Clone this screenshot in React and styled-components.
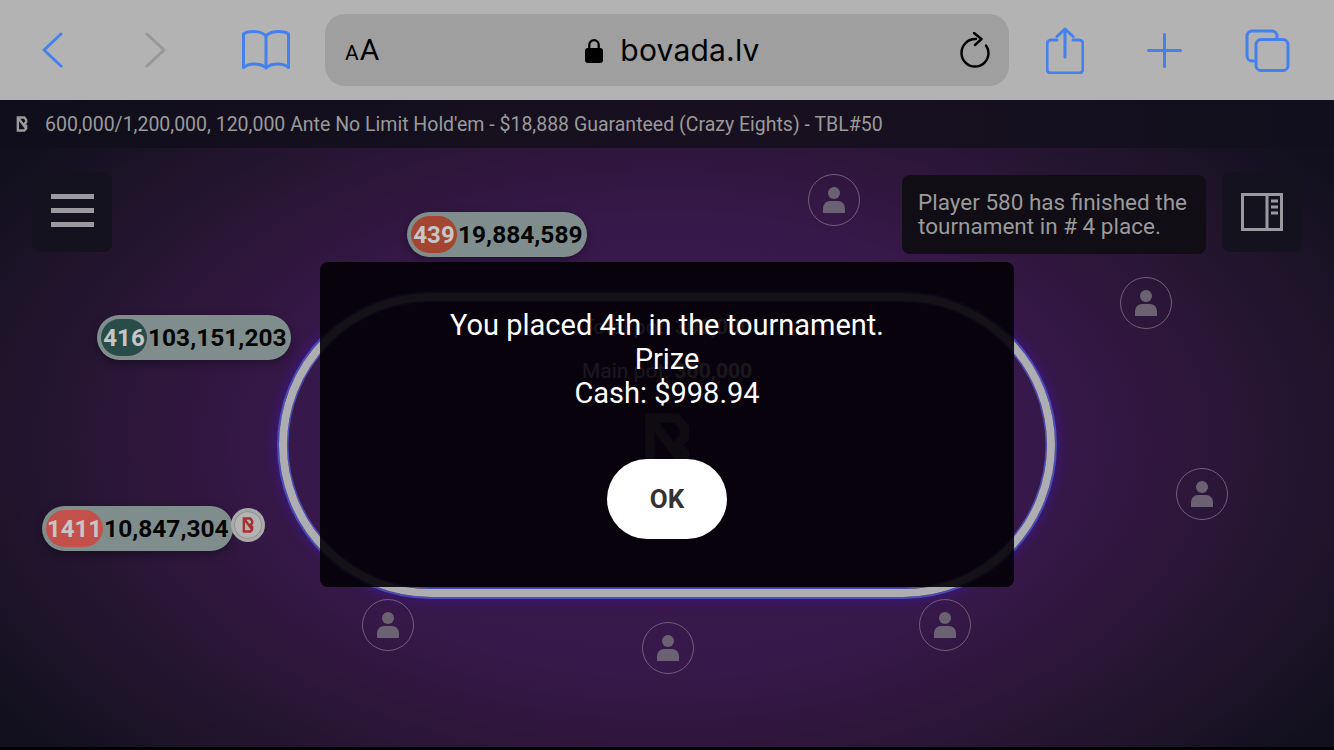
import React from "react";
import styled, { createGlobalStyle } from "styled-components";

const Global = createGlobalStyle`
  html, body { margin: 0; padding: 0; background: #000; }
  body { font-family: Roboto, "Liberation Sans", sans-serif; }
`;

const Page = styled.div`
  width: 1334px;
  height: 750px;
  display: flex;
  flex-direction: column;
  overflow: hidden;
  background: #000;
`;

const BrowserBar = styled.header`
  flex: 0 0 100px;
  display: grid;
  grid-template-columns: 325px 684px 325px;
  align-items: center;
  background: #b3b3b3;
`;

const IconGroup = styled.nav`
  display: flex;
  align-items: center;
  height: 100%;
`;

const ToolIcon = styled.svg`
  flex: none;
  margin-left: ${(p) => p.$ml}px;
  margin-top: ${(p) => p.$mt || 0}px;
  fill: none;
  stroke: ${(p) => p.$color || "#4480ee"};
  stroke-width: 3;
  stroke-linecap: round;
  stroke-linejoin: round;
`;

const UrlField = styled.div`
  height: 72px;
  border-radius: 20px;
  background: #9f9f9f;
  display: flex;
  align-items: center;
  justify-content: space-between;
  padding: 0 19px 0 20px;
  color: #000;
`;

const ReaderMode = styled.div`
  display: flex;
  align-items: baseline;
  width: 40px;
  margin-top: 2px;
`;

const ReaderLetter = styled.span`
  font-size: ${(p) => p.$size}px;
  line-height: 34px;
  margin-right: 1px;
`;

const Domain = styled.div`
  display: flex;
  align-items: center;
  gap: 17px;
  font-family: Inter, Roboto, sans-serif;
  font-size: 30px;
  letter-spacing: 0.2px;
`;

const TitleBar = styled.div`
  flex: 0 0 48px;
  display: flex;
  align-items: center;
  padding-left: 16px;
  gap: 17px;
  background: linear-gradient(90deg, #100e1c, #181020 55%, #110f1d);
  color: #9a9a9a;
  font-size: 19.5px;
`;

const Stage = styled.main`
  position: relative;
  flex: 0 0 599px;
  background: radial-gradient(
    ellipse 800px 470px at 668px 297px,
    #3b1a4c 0%,
    #37184a 48%,
    #2c1638 68%,
    #1e1429 86%,
    #12101f 100%
  );
`;

const Hud = styled.div`
  position: absolute;
  top: 24px;
  left: 32px;
  right: 32px;
  display: flex;
  align-items: flex-start;
  justify-content: flex-end;
  gap: 16px;
`;

const HudButton = styled.button`
  width: 80px;
  height: 80px;
  padding: 0;
  border: 0;
  border-radius: 8px;
  background: #15121f;
  display: flex;
  align-items: center;
  justify-content: center;
  margin-right: ${(p) => (p.$first ? "auto" : 0)};
`;

const Burger = styled.span`
  width: 43px;
  display: flex;
  flex-direction: column;
  gap: 9px;
  margin-bottom: 3px;
`;

const BurgerLine = styled.i`
  display: block;
  height: 5px;
  background: #9c9aa0;
`;

const Notice = styled.div`
  width: 304px;
  height: 79px;
  margin-top: 3px;
  box-sizing: border-box;
  padding: 15px 16px;
  border-radius: 8px;
  background: #100d14;
  color: #9a9a9a;
  font-size: 22.5px;
  line-height: 24px;
`;

const Table = styled.div`
  position: absolute;
  left: 279px;
  top: 145px;
  width: 776px;
  height: 304px;
  box-sizing: border-box;
  border: 8px solid #aeaeb2;
  border-radius: 152px;
  box-shadow: 0 0 0 2px #4a4eb8, inset 0 0 0 1.5px #4a4eb8, 0 0 12px 3px #3c1785;
  display: flex;
  flex-direction: column;
  align-items: center;
`;

const PotLine = styled.div`
  margin-top: ${(p) => p.$mt}px;
  font-size: 21px;
  line-height: 24px;
  color: #e8e8e8;
  & b { font-weight: 700; }
`;

const TableLogo = styled.svg`
  margin-top: 23px;
  width: 50px;
  height: 78px;
  fill: none;
  stroke: #75707a;
  stroke-width: 9;
`;

const Seat = styled.div`
  position: absolute;
  left: ${(p) => p.$x}px;
  top: ${(p) => p.$y}px;
  width: 52px;
  height: 52px;
  box-sizing: border-box;
  border: 1.5px solid #6e6076;
  border-radius: 50%;
  display: flex;
  align-items: center;
  justify-content: center;
`;

const SeatIcon = styled.svg`
  width: 24px;
  height: 26px;
  fill: #6c6172;
`;

const Pill = styled.div`
  position: absolute;
  left: ${(p) => p.$x}px;
  top: ${(p) => p.$y}px;
  height: 45px;
  box-sizing: border-box;
  padding: 4px 4px 4px 4px;
  border-radius: 23px;
  background: #7f8e8c;
  box-shadow: 0 3px 8px rgba(0, 0, 0, 0.35);
  display: flex;
  align-items: center;
  gap: 1px;
  font-size: 24.5px;
  font-weight: 700;
  color: #050505;
`;

const Badge = styled.span`
  height: 37px;
  min-width: 46px;
  padding: 0 1px;
  box-sizing: border-box;
  border-radius: 19px;
  background: ${(p) => p.$color};
  color: #c6c6c6;
  display: flex;
  align-items: center;
  justify-content: center;
  font-size: 24px;
  font-weight: 700;
`;

const DealerChip = styled.div`
  position: absolute;
  left: 231px;
  top: 360px;
  width: 34px;
  height: 34px;
  border-radius: 50%;
  box-sizing: border-box;
  border: 3px solid #a9a9a9;
  background: #b4b4b4;
  box-shadow: inset 0 0 0 1px #8e8e8e;
  display: flex;
  align-items: center;
  justify-content: center;
`;

const BLogo = styled.svg`
  fill: none;
  stroke: ${(p) => p.$color};
  stroke-width: 2.6;
  flex: none;
`;

const Modal = styled.section`
  position: absolute;
  left: 320px;
  top: 114px;
  width: 694px;
  height: 325px;
  box-sizing: border-box;
  padding-top: 46px;
  border-radius: 8px;
  background: rgba(3, 0, 5, 0.9);
  display: flex;
  flex-direction: column;
  align-items: center;
  color: #fff;
  font-size: 29px;
  line-height: 34px;
  text-align: center;
`;

const OkButton = styled.button`
  margin-top: 49px;
  width: 120px;
  height: 80px;
  border: 0;
  border-radius: 40px;
  background: #fff;
  color: #333;
  font-family: Roboto, sans-serif;
  font-size: 26px;
  font-weight: 700;
`;

const BottomEdge = styled.div`
  flex: 1;
  background: #000;
`;

const SEATS = [
  [808, 26],
  [1120, 129],
  [1176, 320],
  [919, 451],
  [642, 474],
  [362, 451],
];

const LOGO_D = "M2 2 H9 L11 4.5 V7 L9 9 L11 11 V14 L9 16 H2 Z M2 2 L11 14";

export default function App() {
  return (
    <Page>
      <Global />
      <BrowserBar>
        <IconGroup>
          <ToolIcon $ml={42} width="21" height="36" viewBox="0 0 21 36">
            <path d="M19 2 L2 18 L19 34" />
          </ToolIcon>
          <ToolIcon $ml={82} $color="#989898" width="21" height="36" viewBox="0 0 21 36">
            <path d="M2 2 L19 18 L2 34" />
          </ToolIcon>
          <ToolIcon $ml={76} width="48" height="40" viewBox="0 0 48 40">
            <path d="M24 6 C21 2.5 16 1.5 11 1.5 C7 1.5 4 2 1.5 4 V37.5 C5 34.5 9 34 12 34 C17 34 21 35 24 38 C27 35 31 34 36 34 C39 34 43 34.5 46.5 37.5 V4 C44 2 41 1.5 37 1.5 C32 1.5 27 2.5 24 6 Z M24 6 V38" />
          </ToolIcon>
        </IconGroup>
        <UrlField>
          <ReaderMode>
            <ReaderLetter $size={21}>A</ReaderLetter>
            <ReaderLetter $size={30}>A</ReaderLetter>
          </ReaderMode>
          <Domain>
            <svg width="18" height="25" viewBox="0 0 18 25" fill="#000">
              <rect x="0" y="10" width="18" height="15" rx="3" />
              <path d="M4.3 11 V6.8 a4.7 4.7 0 0 1 9.4 0 V11" fill="none" stroke="#000" strokeWidth="2.3" />
            </svg>
            <span>bovada.lv</span>
          </Domain>
          <ToolIcon $ml={0} $color="#000" width="30" height="36" viewBox="0 0 30 36" style={{ strokeWidth: 2.4 }}>
            <path d="M16 7 C8 6.5 1.5 13 1.5 21 A13.5 13.5 0 0 0 28.5 21 C28.5 18 27.5 15.5 26 13.5" />
            <path d="M14 1 L21.5 7 L15 13" />
          </ToolIcon>
        </UrlField>
        <IconGroup>
          <ToolIcon $ml={37} width="38" height="47" viewBox="0 0 38 47">
            <path d="M11 13 H5 a4 4 0 0 0 -4 4 V42 a4 4 0 0 0 4 4 H33 a4 4 0 0 0 4 -4 V17 a4 4 0 0 0 -4 -4 H27" />
            <path d="M19 2 V30 M11 9.5 L19 2 L27 9.5" />
          </ToolIcon>
          <ToolIcon $ml={63} width="35" height="35" viewBox="0 0 35 35">
            <path d="M17.5 1.5 V33.5 M1.5 17.5 H33.5" />
          </ToolIcon>
          <ToolIcon $ml={63} width="45" height="43" viewBox="0 0 45 43">
            <path d="M9.5 32 H7 a5 5 0 0 1 -5 -5 V7 a5 5 0 0 1 5 -5 H27 a5 5 0 0 1 5 5 V10" />
            <rect x="11" y="10.5" width="32" height="31" rx="5" />
          </ToolIcon>
        </IconGroup>
      </BrowserBar>

      <TitleBar>
        <BLogo $color="#9a9a9a" width="12" height="18" viewBox="0 0 13 18">
          <path d={LOGO_D} />
        </BLogo>
        <span>600,000/1,200,000, 120,000 Ante No Limit Hold'em - $18,888 Guaranteed (Crazy Eights) - TBL#50</span>
      </TitleBar>

      <Stage>
        <Table>
          <PotLine $mt={14}>Total pot: <b>300,000</b></PotLine>
          <PotLine $mt={20}>Main pot: <b>300,000</b></PotLine>
          <TableLogo viewBox="0 0 13 18" style={{ strokeWidth: 2.4 }}>
            <path d={LOGO_D} />
          </TableLogo>
        </Table>

        {SEATS.map(([x, y]) => (
          <Seat key={`${x}-${y}`} $x={x} $y={y}>
            <SeatIcon viewBox="0 0 24 26">
              <circle cx="12" cy="6" r="6" />
              <path d="M1 26 V21 a7 7 0 0 1 7 -7 h8 a7 7 0 0 1 7 7 v5 z" />
            </SeatIcon>
          </Seat>
        ))}

        <Pill $x={407} $y={64}>
          <Badge $color="#a34530">439</Badge>
          <span>19,884,589</span>
        </Pill>
        <Pill $x={97} $y={167}>
          <Badge $color="#2a4c49">416</Badge>
          <span>103,151,203</span>
        </Pill>
        <Pill $x={42} $y={358}>
          <Badge $color="#c4504c">1411</Badge>
          <span>10,847,304</span>
        </Pill>
        <DealerChip>
          <BLogo $color="#a8302e" width="12" height="18" viewBox="0 0 13 18">
            <path d={LOGO_D} />
          </BLogo>
        </DealerChip>

        <Hud>
          <HudButton $first aria-label="Menu">
            <Burger>
              <BurgerLine />
              <BurgerLine />
              <BurgerLine />
            </Burger>
          </HudButton>
          <Notice>Player 580 has finished the tournament in # 4 place.</Notice>
          <HudButton aria-label="Layout">
            <svg width="42" height="38" viewBox="0 0 42 38" fill="none" stroke="#9c9aa0" strokeWidth="3">
              <rect x="1.5" y="1.5" width="39" height="35" />
              <path d="M26 1.5 V36.5" />
              <path d="M30 8 H37 M30 14 H37 M30 20 H37" strokeWidth="3" />
            </svg>
          </HudButton>
        </Hud>

        <Modal>
          <div>You placed 4th in the tournament.</div>
          <div>Prize</div>
          <div>Cash: $998.94</div>
          <OkButton>OK</OkButton>
        </Modal>
      </Stage>
      <BottomEdge />
    </Page>
  );
}
